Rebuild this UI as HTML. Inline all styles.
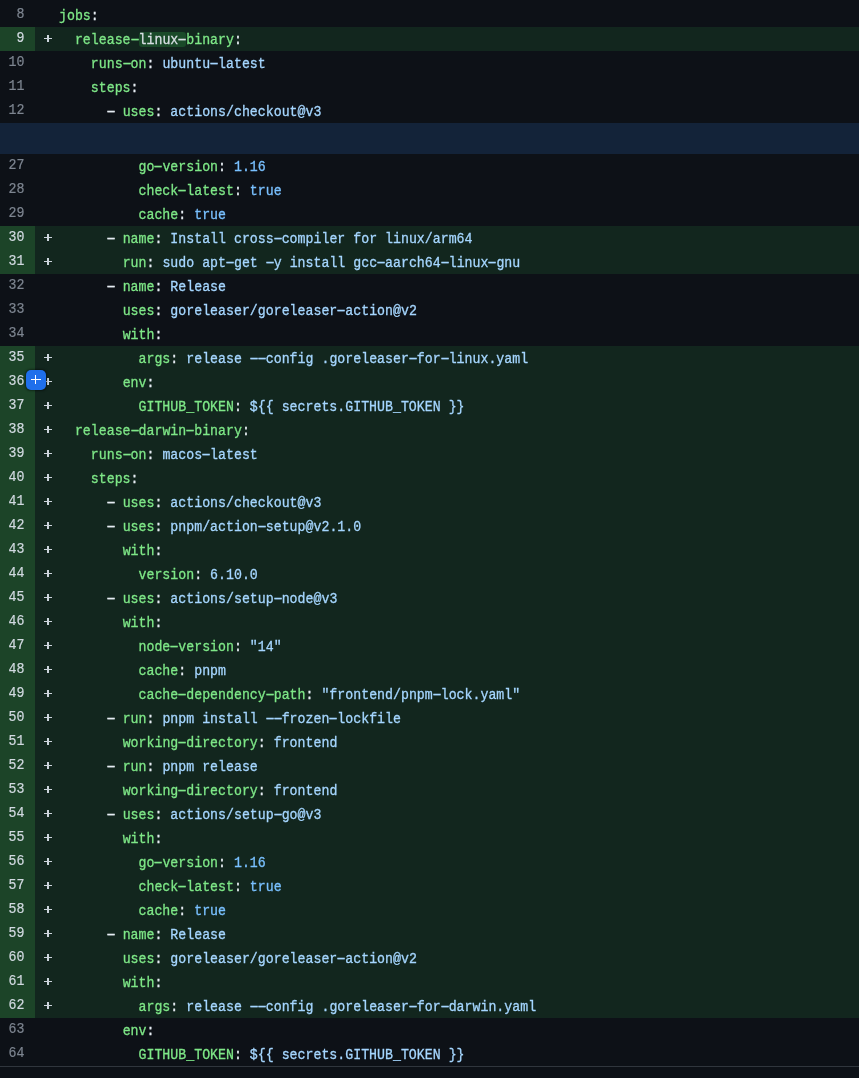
<!DOCTYPE html>
<html><head><meta charset="utf-8">
<style>
html,body{margin:0;padding:0;background:#0d1117;width:859px;height:1078px;overflow:hidden;}
body{font-family:"Liberation Mono",monospace;font-size:13.25px;color:#e6edf3;position:relative;}
.wrap{position:absolute;left:0;top:3px;width:859px;will-change:transform;}
.row{position:relative;height:24px;line-height:24px;white-space:pre;}
.row.add{background:#12261e;}
.nbg{position:absolute;left:0;top:0;width:35px;height:24px;}
.add .nbg{background:#1c4428;}
.num{position:absolute;left:0;top:-0.5px;width:24.5px;height:24px;text-align:right;color:#7d8590;}
.add .num{color:#d1d9e0;}
.num span,.code span.t{display:inline-block;}
.num>span{transform:scaleY(1.15);transform-origin:0 15.5px;}
.mk{position:absolute;left:0;top:0;width:0;height:0;}
.add .mk:before{content:"";position:absolute;left:44.2px;top:11.1px;width:7.8px;height:1.3px;background:#ccd4dc;}
.add .mk:after{content:"";position:absolute;left:47.4px;top:7.9px;width:1.4px;height:7.3px;background:#ccd4dc;}
.code{position:absolute;left:59px;top:1.5px;}
.code>span{display:inline-block;transform:scaleY(1.15);transform-origin:0 15.5px;}
.k{color:#7ee787;}
.s{color:#a5d6ff;}
.c{color:#79c0ff;}
.p{color:#e6edf3;}
.w{color:#d8dee4;}
.hlbox{position:absolute;left:139px;top:5px;width:47px;height:14.7px;background:#1a4a29;border-radius:3px;z-index:1;}
.code{z-index:2;}
.d{display:inline-block;font-style:normal;transform:scaleX(1.9);}
.code{-webkit-text-stroke:0.28px currentColor;}
.num{-webkit-text-stroke:0.2px currentColor;}
.hunk{height:31px;background:#132339;}
.border{position:absolute;left:0;top:1066px;width:859px;height:1px;background:#30363d;}
.btn{position:absolute;left:26.4px;top:370.4px;width:19.2px;height:19.2px;border-radius:5px;background:#1f6feb;box-shadow:0 0 2px 0.5px rgba(0,0,0,.4);z-index:5;}
.btn:before{content:"";position:absolute;left:4.3px;top:8.5px;width:10.3px;height:1.4px;background:#fff;}
.btn:after{content:"";position:absolute;left:8.5px;top:4.5px;width:1.4px;height:9.5px;background:#fff;}
</style></head><body>
<div class="wrap">
<div class="row"><div class="nbg"></div><div class="num"><span>8</span></div><div class="mk"></div><div class="code"><span><span class="k">jobs</span><span class="p">:</span></span></div></div>
<div class="row add"><div class="hlbox"></div><div class="nbg"></div><div class="num"><span>9</span></div><div class="mk"></div><div class="code"><span>  <span class="k">release<i class="d">-</i></span><span class="w">linux<i class="d">-</i></span><span class="k">binary</span><span class="p">:</span></span></div></div>
<div class="row"><div class="nbg"></div><div class="num"><span>10</span></div><div class="mk"></div><div class="code"><span>    <span class="k">runs<i class="d">-</i>on</span><span class="p">:</span> <span class="s">ubuntu<i class="d">-</i>latest</span></span></div></div>
<div class="row"><div class="nbg"></div><div class="num"><span>11</span></div><div class="mk"></div><div class="code"><span>    <span class="k">steps</span><span class="p">:</span></span></div></div>
<div class="row"><div class="nbg"></div><div class="num"><span>12</span></div><div class="mk"></div><div class="code"><span>      <span class="p"><i class="d">-</i> </span><span class="k">uses</span><span class="p">:</span> <span class="s">actions/checkout@v3</span></span></div></div>
<div class="hunk"></div>
<div class="row"><div class="nbg"></div><div class="num"><span>27</span></div><div class="mk"></div><div class="code"><span>          <span class="k">go<i class="d">-</i>version</span><span class="p">:</span> <span class="c">1.16</span></span></div></div>
<div class="row"><div class="nbg"></div><div class="num"><span>28</span></div><div class="mk"></div><div class="code"><span>          <span class="k">check<i class="d">-</i>latest</span><span class="p">:</span> <span class="c">true</span></span></div></div>
<div class="row"><div class="nbg"></div><div class="num"><span>29</span></div><div class="mk"></div><div class="code"><span>          <span class="k">cache</span><span class="p">:</span> <span class="c">true</span></span></div></div>
<div class="row add"><div class="nbg"></div><div class="num"><span>30</span></div><div class="mk"></div><div class="code"><span>      <span class="p"><i class="d">-</i> </span><span class="k">name</span><span class="p">:</span> <span class="s">Install cross<i class="d">-</i>compiler for linux/arm64</span></span></div></div>
<div class="row add"><div class="nbg"></div><div class="num"><span>31</span></div><div class="mk"></div><div class="code"><span>        <span class="k">run</span><span class="p">:</span> <span class="s">sudo apt<i class="d">-</i>get <i class="d">-</i>y install gcc<i class="d">-</i>aarch64<i class="d">-</i>linux<i class="d">-</i>gnu</span></span></div></div>
<div class="row"><div class="nbg"></div><div class="num"><span>32</span></div><div class="mk"></div><div class="code"><span>      <span class="p"><i class="d">-</i> </span><span class="k">name</span><span class="p">:</span> <span class="s">Release</span></span></div></div>
<div class="row"><div class="nbg"></div><div class="num"><span>33</span></div><div class="mk"></div><div class="code"><span>        <span class="k">uses</span><span class="p">:</span> <span class="s">goreleaser/goreleaser<i class="d">-</i>action@v2</span></span></div></div>
<div class="row"><div class="nbg"></div><div class="num"><span>34</span></div><div class="mk"></div><div class="code"><span>        <span class="k">with</span><span class="p">:</span></span></div></div>
<div class="row add"><div class="nbg"></div><div class="num"><span>35</span></div><div class="mk"></div><div class="code"><span>          <span class="k">args</span><span class="p">:</span> <span class="s">release <i class="d">-</i><i class="d">-</i>config .goreleaser<i class="d">-</i>for<i class="d">-</i>linux.yaml</span></span></div></div>
<div class="row add"><div class="nbg"></div><div class="num"><span>36</span></div><div class="mk"></div><div class="code"><span>        <span class="k">env</span><span class="p">:</span></span></div></div>
<div class="row add"><div class="nbg"></div><div class="num"><span>37</span></div><div class="mk"></div><div class="code"><span>          <span class="k">GITHUB_TOKEN</span><span class="p">:</span> <span class="s">${{ secrets.GITHUB_TOKEN }}</span></span></div></div>
<div class="row add"><div class="nbg"></div><div class="num"><span>38</span></div><div class="mk"></div><div class="code"><span>  <span class="k">release<i class="d">-</i>darwin<i class="d">-</i>binary</span><span class="p">:</span></span></div></div>
<div class="row add"><div class="nbg"></div><div class="num"><span>39</span></div><div class="mk"></div><div class="code"><span>    <span class="k">runs<i class="d">-</i>on</span><span class="p">:</span> <span class="s">macos<i class="d">-</i>latest</span></span></div></div>
<div class="row add"><div class="nbg"></div><div class="num"><span>40</span></div><div class="mk"></div><div class="code"><span>    <span class="k">steps</span><span class="p">:</span></span></div></div>
<div class="row add"><div class="nbg"></div><div class="num"><span>41</span></div><div class="mk"></div><div class="code"><span>      <span class="p"><i class="d">-</i> </span><span class="k">uses</span><span class="p">:</span> <span class="s">actions/checkout@v3</span></span></div></div>
<div class="row add"><div class="nbg"></div><div class="num"><span>42</span></div><div class="mk"></div><div class="code"><span>      <span class="p"><i class="d">-</i> </span><span class="k">uses</span><span class="p">:</span> <span class="s">pnpm/action<i class="d">-</i>setup@v2.1.0</span></span></div></div>
<div class="row add"><div class="nbg"></div><div class="num"><span>43</span></div><div class="mk"></div><div class="code"><span>        <span class="k">with</span><span class="p">:</span></span></div></div>
<div class="row add"><div class="nbg"></div><div class="num"><span>44</span></div><div class="mk"></div><div class="code"><span>          <span class="k">version</span><span class="p">:</span> <span class="s">6.10.0</span></span></div></div>
<div class="row add"><div class="nbg"></div><div class="num"><span>45</span></div><div class="mk"></div><div class="code"><span>      <span class="p"><i class="d">-</i> </span><span class="k">uses</span><span class="p">:</span> <span class="s">actions/setup<i class="d">-</i>node@v3</span></span></div></div>
<div class="row add"><div class="nbg"></div><div class="num"><span>46</span></div><div class="mk"></div><div class="code"><span>        <span class="k">with</span><span class="p">:</span></span></div></div>
<div class="row add"><div class="nbg"></div><div class="num"><span>47</span></div><div class="mk"></div><div class="code"><span>          <span class="k">node<i class="d">-</i>version</span><span class="p">:</span> <span class="s">&quot;14&quot;</span></span></div></div>
<div class="row add"><div class="nbg"></div><div class="num"><span>48</span></div><div class="mk"></div><div class="code"><span>          <span class="k">cache</span><span class="p">:</span> <span class="s">pnpm</span></span></div></div>
<div class="row add"><div class="nbg"></div><div class="num"><span>49</span></div><div class="mk"></div><div class="code"><span>          <span class="k">cache<i class="d">-</i>dependency<i class="d">-</i>path</span><span class="p">:</span> <span class="s">&quot;frontend/pnpm<i class="d">-</i>lock.yaml&quot;</span></span></div></div>
<div class="row add"><div class="nbg"></div><div class="num"><span>50</span></div><div class="mk"></div><div class="code"><span>      <span class="p"><i class="d">-</i> </span><span class="k">run</span><span class="p">:</span> <span class="s">pnpm install <i class="d">-</i><i class="d">-</i>frozen<i class="d">-</i>lockfile</span></span></div></div>
<div class="row add"><div class="nbg"></div><div class="num"><span>51</span></div><div class="mk"></div><div class="code"><span>        <span class="k">working<i class="d">-</i>directory</span><span class="p">:</span> <span class="s">frontend</span></span></div></div>
<div class="row add"><div class="nbg"></div><div class="num"><span>52</span></div><div class="mk"></div><div class="code"><span>      <span class="p"><i class="d">-</i> </span><span class="k">run</span><span class="p">:</span> <span class="s">pnpm release</span></span></div></div>
<div class="row add"><div class="nbg"></div><div class="num"><span>53</span></div><div class="mk"></div><div class="code"><span>        <span class="k">working<i class="d">-</i>directory</span><span class="p">:</span> <span class="s">frontend</span></span></div></div>
<div class="row add"><div class="nbg"></div><div class="num"><span>54</span></div><div class="mk"></div><div class="code"><span>      <span class="p"><i class="d">-</i> </span><span class="k">uses</span><span class="p">:</span> <span class="s">actions/setup<i class="d">-</i>go@v3</span></span></div></div>
<div class="row add"><div class="nbg"></div><div class="num"><span>55</span></div><div class="mk"></div><div class="code"><span>        <span class="k">with</span><span class="p">:</span></span></div></div>
<div class="row add"><div class="nbg"></div><div class="num"><span>56</span></div><div class="mk"></div><div class="code"><span>          <span class="k">go<i class="d">-</i>version</span><span class="p">:</span> <span class="c">1.16</span></span></div></div>
<div class="row add"><div class="nbg"></div><div class="num"><span>57</span></div><div class="mk"></div><div class="code"><span>          <span class="k">check<i class="d">-</i>latest</span><span class="p">:</span> <span class="c">true</span></span></div></div>
<div class="row add"><div class="nbg"></div><div class="num"><span>58</span></div><div class="mk"></div><div class="code"><span>          <span class="k">cache</span><span class="p">:</span> <span class="c">true</span></span></div></div>
<div class="row add"><div class="nbg"></div><div class="num"><span>59</span></div><div class="mk"></div><div class="code"><span>      <span class="p"><i class="d">-</i> </span><span class="k">name</span><span class="p">:</span> <span class="s">Release</span></span></div></div>
<div class="row add"><div class="nbg"></div><div class="num"><span>60</span></div><div class="mk"></div><div class="code"><span>        <span class="k">uses</span><span class="p">:</span> <span class="s">goreleaser/goreleaser<i class="d">-</i>action@v2</span></span></div></div>
<div class="row add"><div class="nbg"></div><div class="num"><span>61</span></div><div class="mk"></div><div class="code"><span>        <span class="k">with</span><span class="p">:</span></span></div></div>
<div class="row add"><div class="nbg"></div><div class="num"><span>62</span></div><div class="mk"></div><div class="code"><span>          <span class="k">args</span><span class="p">:</span> <span class="s">release <i class="d">-</i><i class="d">-</i>config .goreleaser<i class="d">-</i>for<i class="d">-</i>darwin.yaml</span></span></div></div>
<div class="row"><div class="nbg"></div><div class="num"><span>63</span></div><div class="mk"></div><div class="code"><span>        <span class="k">env</span><span class="p">:</span></span></div></div>
<div class="row"><div class="nbg"></div><div class="num"><span>64</span></div><div class="mk"></div><div class="code"><span>          <span class="k">GITHUB_TOKEN</span><span class="p">:</span> <span class="s">${{ secrets.GITHUB_TOKEN }}</span></span></div></div>
</div>
<div class="border"></div>
<div class="btn"></div>
</body></html>
